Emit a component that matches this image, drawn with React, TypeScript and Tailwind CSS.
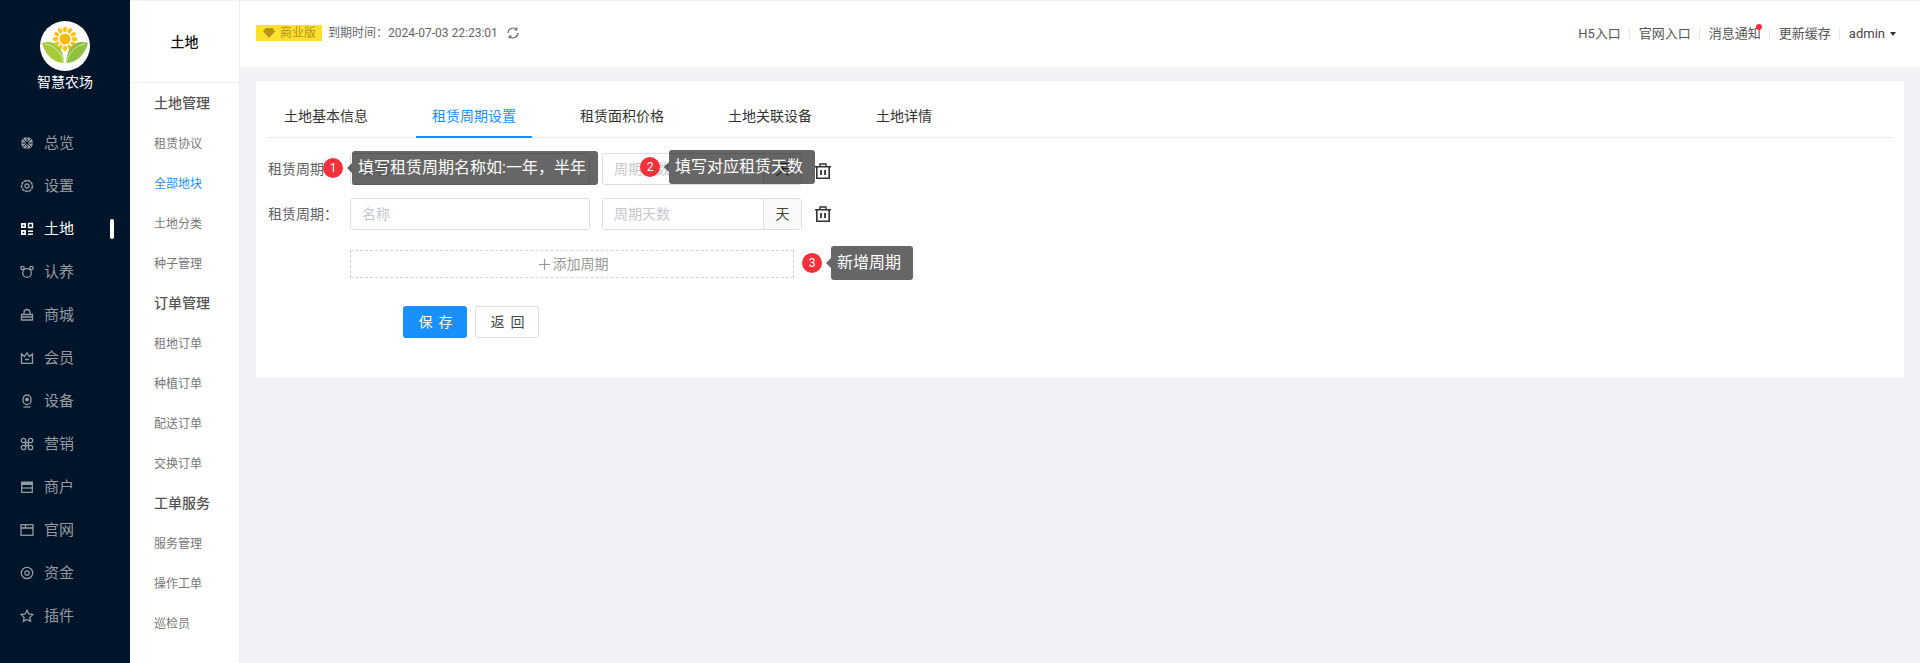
import React from "react";

const font = { fontFamily: 'Roboto,"Noto Sans CJK SC","Noto Sans",sans-serif' };

function Ico({ children }: { children: React.ReactNode }) {
  return (
    <svg width="14" height="14" viewBox="0 0 14 14" fill="none" stroke="currentColor" strokeWidth="1.3" className="shrink-0">
      {children}
    </svg>
  );
}

const navs: { t: string; a?: boolean; i: React.ReactNode }[] = [
  { t: "总览", i: <><circle cx="7" cy="7" r="6" fill="currentColor" stroke="none" /><path d="M3 3l8 8M11 3l-8 8M7 1v12M1 7h12" stroke="#001529" strokeWidth="0.9" /></> },
  { t: "设置", i: <><circle cx="7" cy="7" r="5.4" strokeWidth="1.6" strokeDasharray="3 0.6" /><circle cx="7" cy="7" r="2" /></> },
  { t: "土地", a: true, i: <><path d="M1 1h5v5H1zM1 8h5v5H1zM8 8.5h5v1.6H8zM8 11.5h5V13H8z" fill="currentColor" stroke="none" /><path d="M8.5 1.5h4v4h-4z" /><path d="M2.7 2.7h1.6v1.6H2.7zM2.7 9.7h1.6v1.6H2.7z" fill="#001529" stroke="none" /></> },
  { t: "认养", i: <><circle cx="7" cy="8" r="4.3" /><circle cx="2.5" cy="3" r="1.7" /><circle cx="11.5" cy="3" r="1.7" /></> },
  { t: "商城", i: <><path d="M1.5 6.5h11V12h-11z" /><path d="M4 6.5V4.5a3 3 0 0 1 6 0v2M1.5 9h11" /></> },
  { t: "会员", i: <path d="M1.5 3l3 2.5L7 1.8l2.5 3.7 3-2.5V12.300h-11zM5 8.500h4" /> },
  { t: "设备", i: <><rect x="3" y="1" width="8" height="9.500" rx="4" /><circle cx="7" cy="5.500" r="1.300" fill="currentColor" /><path d="M3.500 13h7" /></> },
  { t: "营销", i: <><circle cx="3.500" cy="3.500" r="2.200" /><circle cx="10.500" cy="3.500" r="2.200" /><circle cx="3.500" cy="10.500" r="2.200" /><circle cx="10.500" cy="10.500" r="2.200" /><path d="M5.500 5.500h3v3h-3z" /></> },
  { t: "商户", i: <><path d="M1 1.500h12v3.500H1z" fill="currentColor" stroke="none" /><path d="M1.700 5v7.300h10.600V5" /><path d="M1.500 8h11" /></> },
  { t: "官网", i: <><rect x="1" y="1.700" width="12" height="10.600" /><path d="M1 5h12M5.500 5V1.700" /></> },
  { t: "资金", i: <><circle cx="7" cy="7" r="5.700" /><circle cx="7" cy="7" r="2.200" /></> },
  { t: "插件", i: <path d="M7 1.300l1.800 3.700 4 .6-2.900 2.800.7 4L7 10.500l-3.600 1.900.7-4L1.200 5.600l4-.6z" /> },
];

const subs: [string, boolean, boolean][] = [
  ["土地管理", true, false],
  ["租赁协议", false, false],
  ["全部地块", false, true],
  ["土地分类", false, false],
  ["种子管理", false, false],
  ["订单管理", true, false],
  ["租地订单", false, false],
  ["种植订单", false, false],
  ["配送订单", false, false],
  ["交换订单", false, false],
  ["工单服务", true, false],
  ["服务管理", false, false],
  ["操作工单", false, false],
  ["巡检员", false, false],
];

function Logo() {
  return (
    <svg width="50" height="50" viewBox="0 0 50 50">
      <circle cx="25" cy="25" r="25" fill="#fff" />
      {Array.from({ length: 12 }).map((_, i) => (
        <ellipse key={i} cx="25" cy="8.500" rx="2" ry="2.800" fill="#fcc419" transform={`rotate(${i * 30} 25 18)`} />
      ))}
      <circle cx="25" cy="18" r="5.500" fill="#fdb813" />
      <path d="M2 22c10-3 21 1 22 20C13 42 5 33 2 22z" fill="#a4cc3a" />
      <path d="M48 22c-10-3-21 1-22 20 11 0 19-9 22-20z" fill="#8fc03f" />
      <path d="M5 23c8 1 16 7 19 19" stroke="#e4f0c0" strokeWidth="0.8" fill="none" />
      <path d="M45 23c-8 1-16 7-19 19" stroke="#e4f0c0" strokeWidth="0.8" fill="none" />
    </svg>
  );
}

function Badge({ n }: { n: number }) {
  return (
    <span className="w-5 h-5 rounded-full bg-[#f5303a] text-white text-[12px] leading-5 text-center">{n}</span>
  );
}

function Tip({ n, text, className }: { n: number; text: string; className: string }) {
  return (
    <div className={`absolute flex items-center h-[34px] ${className}`}>
      <Badge n={n} />
      <span className="ml-1 w-0 h-0 border-y-[5px] border-y-transparent border-r-[5px] border-r-[rgba(0,0,0,0.6)]" />
      <span className="h-[34px] leading-[34px] pl-[6px] pr-3 bg-[rgba(0,0,0,0.6)] rounded-[3px] text-white text-[16px] whitespace-nowrap">{text}</span>
    </div>
  );
}

function Trash({ className }: { className: string }) {
  return (
    <svg width="16" height="16" viewBox="0 0 16 16" fill="none" stroke="#333" strokeWidth="1.400" className={`ml-[13px] ${className}`}>
      <path d="M0 3.700h16M5 3.200V1h6v2.200" />
      <path d="M1.800 4v11.200h12.400V4" strokeWidth="1.600" />
      <path d="M6 7v5M10 7v5" strokeWidth="1.800" />
    </svg>
  );
}

function Row({ tips, trash }: { tips?: React.ReactNode; trash: string }) {
  return (
    <div className="relative flex items-center h-8 mb-[13px]">
      <label className="w-[82px] text-[14px] text-[#606266]">租赁周期：</label>
      <div className="w-[240px] h-8 border border-[#dcdee2] rounded-[3px] px-[11px] text-[14px] leading-[30px] text-[#c5c8ce]">名称</div>
      <div className="flex ml-3 w-[200px] h-8 border border-[#dcdee2] rounded-[3px] text-[14px] leading-[30px]">
        <div className="flex-1 px-[11px] text-[#c5c8ce] border-r border-[#dcdee2]">周期天数</div>
        <div className="w-[37px] text-center bg-[#f9f9f9] text-[#444]">天</div>
      </div>
      <Trash className={trash} />
      {tips}
    </div>
  );
}

export default function App() {
  return (
    <div className="flex h-[663px] w-[1920px] overflow-hidden bg-[#f0f2f5]" style={font}>
      <aside className="w-[130px] shrink-0 bg-[#001529] flex flex-col">
        <div className="flex flex-col items-center pt-[21px]">
          <Logo />
          <div className="mt-[1px] text-[14px] leading-5 text-white">智慧农场</div>
        </div>
        <nav className="mt-[29px]">
          {navs.map((n) => (
            <div key={n.t} className={`relative flex items-center h-[43px] pl-[20px] ${n.a ? "text-white" : "text-[#959aa1]"}`}>
              <Ico>{n.i}</Ico>
              <span className="ml-[10px] text-[15px] leading-[24px] pt-[1px]">{n.t}</span>
              {n.a && <span className="absolute left-[110px] top-[12px] w-1 h-5 rounded-sm bg-white" />}
            </div>
          ))}
        </nav>
      </aside>
      <aside className="w-[110px] shrink-0 bg-white border-r border-[#eeeeee] flex flex-col">
        <div className="h-[83px] border-b border-[#f2f2f2] border-t pt-[31px] text-center text-[14px] leading-5 font-medium text-[#111]">土地</div>
        <div className="pl-[24px]">
          {subs.map(([t, head, act]) => (
            <div
              key={t}
              className={`h-10 ${head ? "leading-[40px] text-[14px] font-medium text-[#555]" : act ? "leading-[42px] text-[12px] text-[#1890ff]" : "leading-[42px] text-[12px] text-[#777]"}`}
            >
              {t}
            </div>
          ))}
        </div>
      </aside>
      <main className="flex-1 flex flex-col min-w-0">
        <header className="h-[67px] bg-white border-t border-[#f2f2f2] flex items-center justify-between pl-4 pr-6 pb-[1px]">
          <div className="flex items-center text-[12px] -mt-[1px]">
            <span className="flex items-center h-4 w-[66px] pl-[7px] bg-[#fde12d] text-[#b8921e]">
              <svg width="12" height="10" viewBox="0 0 12 10" fill="#b8921e"><path d="M2.500 0h7L12 3.500 6 10 0 3.500z" /></svg>
              <span className="ml-[5px]">商业版</span>
            </span>
            <span className="ml-[6px] text-[#666]">到期时间：2024-07-03 22:23:01</span>
            <svg width="12" height="12" viewBox="0 0 12 12" fill="none" stroke="#666" strokeWidth="1.200" className="ml-[9px]">
              <path d="M1 6a5 5 0 0 1 8.500-3.500M11 6a5 5 0 0 1-8.500 3.500" />
              <path d="M9.800 0.500v2.500H7.300M2.200 11.500V9h2.500" />
            </svg>
          </div>
          <div className="flex items-center text-[13px] text-[#555]">
            <span>H5入口</span>
            <i className="w-px h-3 bg-[#e8e8e8] mx-[8.500px]" />
            <span>官网入口</span>
            <i className="w-px h-3 bg-[#e8e8e8] mx-[8.500px]" />
            <span className="relative">
              消息通知
              <i className="absolute -right-[1px] top-[0px] w-[6px] h-[6px] rounded-full bg-[#f5303a]" />
            </span>
            <i className="w-px h-3 bg-[#e8e8e8] mx-[8.500px]" />
            <span>更新缓存</span>
            <i className="w-px h-3 bg-[#e8e8e8] mx-[8.500px]" />
            <span className="text-[#444]">admin</span>
            <i className="ml-[5px] w-0 h-0 border-x-[3.500px] border-x-transparent border-t-[4px] border-t-[#333]" />
          </div>
        </header>
        <div className="mt-[14px] mx-4 h-[296px] bg-white px-3 pt-[15px]">
          <div className="flex h-[42px] border-b border-[#e8eaec] text-[14px] text-[#333]">
            {["土地基本信息", "租赁周期设置", "租赁面积价格", "土地关联设备", "土地详情"].map((t, i) => (
              <div
                key={t}
                className={`h-[42px] px-4 mr-8 leading-[40px] ${i === 1 ? "text-[#1890ff] border-b-2 border-[#1890ff]" : ""}`}
              >
                {t}
              </div>
            ))}
          </div>
          <div className="pt-[15px]">
            <Row
              trash="mt-1"
              tips={
                <>
                  <Tip n={1} text="填写租赁周期名称如:一年，半年" className="left-[55px] top-[-2px]" />
                  <Tip n={2} text="填写对应租赁天数" className="left-[372px] top-[-3px]" />
                </>
              }
            />
            <Row trash="mt-0" />
            <div className="relative ml-[82px] mt-5 w-[444px] h-7 border border-dashed border-[#d5d5d5] flex items-center justify-center pl-[3px] text-[14px] text-[#999]">
              <svg width="11" height="11" viewBox="0 0 11 11" stroke="#999" strokeWidth="1.200" className="mr-[3px]"><path d="M5.500 0v11M0 5.500h11" /></svg>
              添加周期
              <Tip n={3} text="新增周期" className="left-[451px] top-[-5px]" />
            </div>
            <div className="flex ml-[135px] mt-7 gap-2 text-[14px]">
              <div className="w-16 h-8 pl-[7px] rounded-[3px] bg-[#1890ff] text-white text-center leading-8 tracking-[6px]">保存</div>
              <div className="w-16 h-8 pl-[7px] rounded-[3px] border border-[#dcdee2] text-[#444] text-center leading-[30px] tracking-[6px]">返回</div>
            </div>
          </div>
        </div>
      </main>
    </div>
  );
}
